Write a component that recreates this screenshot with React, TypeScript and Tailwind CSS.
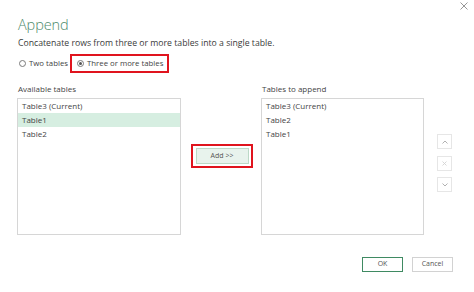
import React from "react";

const avail = ["Table3 (Current)", "Table1", "Table2"];
const toAppend = ["Table3 (Current)", "Table2", "Table1"];

function Radio({ checked }: { checked?: boolean }) {
  return (
    <span className="w-[7px] h-[7px] rounded-full border border-[#7a7a7a] flex items-center justify-center bg-white">
      {checked && <span className="w-[3px] h-[3px] rounded-full bg-[#555]" />}
    </span>
  );
}

function SideBtn({ children }: { children: React.ReactNode }) {
  return (
    <div className="w-[15px] h-[15px] border border-[#e6e6e6] flex items-center justify-center">
      {children}
    </div>
  );
}

export default function App() {
  return (
    <div
      className="relative w-[474px] h-[292px] bg-white text-[#444] overflow-hidden"
      style={{ fontFamily: '"Open Sans", "Noto Sans", sans-serif' }}
    >
      <div className="absolute left-[460px] top-[2px]">
        <svg width="8" height="8" viewBox="0 0 8 8">
          <path d="M0.5 0.5L7.5 7.5M7.5 0.5L0.5 7.5" stroke="#8a8a8a" strokeWidth="0.9" />
        </svg>
      </div>

      <div className="pl-[18px] pt-[16px]">
        <div className="text-[14.5px] leading-[18px] font-light text-[#4e8b6c] tracking-[-0.1px]">
          Append
        </div>
        <div className="mt-[3px] text-[8.7px] leading-[12px] text-[#3a3a3a]">
          Concatenate rows from three or more tables into a single table.
        </div>

        <div className="mt-[5px] flex items-center text-[7.8px] h-[19px] text-[#444]">
          <label className="flex items-center gap-[3px] pl-[1px]">
            <Radio /> Two tables
          </label>
          <div className="ml-[2px] h-[19px] border-2 border-[#e0141e] flex items-center pl-[5px] pr-[4px] gap-[3px]">
            <Radio checked /> Three or more tables
          </div>
        </div>
      </div>

      <div className="flex pl-[17px] mt-[9.5px]">
        <div className="flex flex-col">
          <div className="text-[8px] leading-[11px] text-[#444] pl-[1px]">Available tables</div>
          <div className="mt-[4.5px] w-[164px] h-[137px] border border-[#d6d6d6] text-[8px] text-[#444]">
            {avail.map((t, i) => (
              <div
                key={t}
                className={
                  "h-[14px] leading-[14px] px-[4px] " + (i === 1 ? "bg-[#d6eee1]" : "")
                }
              >
                {t}
              </div>
            ))}
          </div>
        </div>

        <div className="w-[80px] flex flex-col items-center pt-[61.5px] pl-[2px]">
          <div className="border-2 border-[#e0141e] py-[2px] px-[2.5px]">
            <div className="w-[53px] h-[16px] bg-[#e8f3ed] border border-[#bcd9c7] text-[7px] text-[#555] flex items-center justify-center">
              Add &gt;&gt;
            </div>
          </div>
        </div>

        <div className="flex flex-col">
          <div className="text-[8px] leading-[11px] text-[#444] pl-[1px]">Tables to append</div>
          <div className="mt-[4.5px] w-[163px] h-[137px] border border-[#d6d6d6] text-[8px] text-[#444]">
            {toAppend.map((t) => (
              <div key={t} className="h-[14px] leading-[14px] px-[4px]">
                {t}
              </div>
            ))}
          </div>
        </div>

        <div className="ml-[13px] pt-[51.5px] flex flex-col gap-[6.5px]">
          <SideBtn>
            <svg width="6" height="4" viewBox="0 0 6 4">
              <path d="M0.5 3.5L3 1L5.5 3.5" stroke="#a8a8a8" fill="none" strokeWidth="0.9" />
            </svg>
          </SideBtn>
          <SideBtn>
            <svg width="5" height="5" viewBox="0 0 5 5">
              <path d="M0.5 0.5L4.5 4.5M4.5 0.5L0.5 4.5" stroke="#d4d4d4" strokeWidth="0.9" />
            </svg>
          </SideBtn>
          <SideBtn>
            <svg width="6" height="4" viewBox="0 0 6 4">
              <path d="M0.5 0.5L3 3L5.5 0.5" stroke="#a8a8a8" fill="none" strokeWidth="0.9" />
            </svg>
          </SideBtn>
        </div>
      </div>

      <div className="flex justify-end gap-[9px] pr-[21px] mt-[22px]">
        <div className="w-[41px] h-[15px] border border-[#3f8a62] text-[7px] flex items-center justify-center text-[#555]">
          OK
        </div>
        <div className="w-[41px] h-[15px] border border-[#d2d2d2] text-[7px] flex items-center justify-center text-[#555]">
          Cancel
        </div>
      </div>
    </div>
  );
}
